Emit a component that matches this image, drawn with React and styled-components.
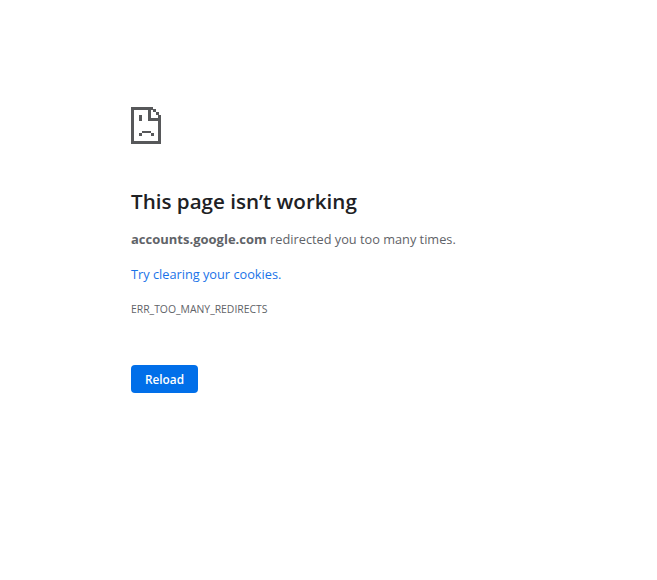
import styled, { createGlobalStyle } from "styled-components";

const Global = createGlobalStyle`
  html, body {
    margin: 0;
    background: #fff;
  }
  body {
    font-family: "Open Sans", "Liberation Sans", sans-serif;
  }
`;

const Page = styled.main`
  box-sizing: border-box;
  width: 657px;
  height: 580px;
  padding: 107px 0 0 131px;
`;

const IconWrap = styled.div`
  width: 30px;
  height: 38px;
  margin-bottom: 41px;
`;

const Heading = styled.h1`
  margin: 0 0 14px;
  height: 30px;
  font-size: 20.6px;
  line-height: 30px;
  font-weight: 600;
  color: #202124;
`;

const Message = styled.p`
  margin: 0 0 17px;
  height: 18px;
  font-size: 12.75px;
  line-height: 18px;
  color: #5f6368;

  strong {
    font-weight: 700;
    font-size: 13px;
  }
`;

const Hint = styled.a`
  display: block;
  margin-bottom: 18px;
  height: 18px;
  font-size: 12.75px;
  line-height: 18px;
  color: #1a73e8;
  text-decoration: none;
`;

const Code = styled.div`
  height: 16px;
  font-size: 10.4px;
  line-height: 16px;
  color: #5f6368;
  margin-bottom: 48px;
`;

const ReloadButton = styled.button`
  display: block;
  width: 67px;
  height: 28px;
  padding: 0;
  border: none;
  border-radius: 4px;
  background: #016fe9;
  color: #fff;
  font-family: inherit;
  font-size: 11.8px;
  font-weight: 600;
`;

function SadPage() {
  return (
    <svg width="30" height="38" viewBox="0 0 30 38" shapeRendering="crispEdges" fill="#57585a">
      <path d="M0 0h22v3h-19v31h24v-26h3v29h-30z" />
      <path d="M17 0h3v11h10v3h-13z" />
      <path d="M22 2h3v3h-3zM25 5h3v3h-3z" />
      <path d="M8 8h3v6h-3zM11 24h9v2h-9zM8 26h3v3h-3zM20 26h3v3h-3z" />
    </svg>
  );
}

export default function App() {
  return (
    <Page>
      <Global />
      <IconWrap>
        <SadPage />
      </IconWrap>
      <Heading>This page isn’t working</Heading>
      <Message>
        <strong>accounts.google.com</strong> redirected you too many times.
      </Message>
      <Hint href="#">Try clearing your cookies.</Hint>
      <Code>ERR_TOO_MANY_REDIRECTS</Code>
      <ReloadButton>Reload</ReloadButton>
    </Page>
  );
}
